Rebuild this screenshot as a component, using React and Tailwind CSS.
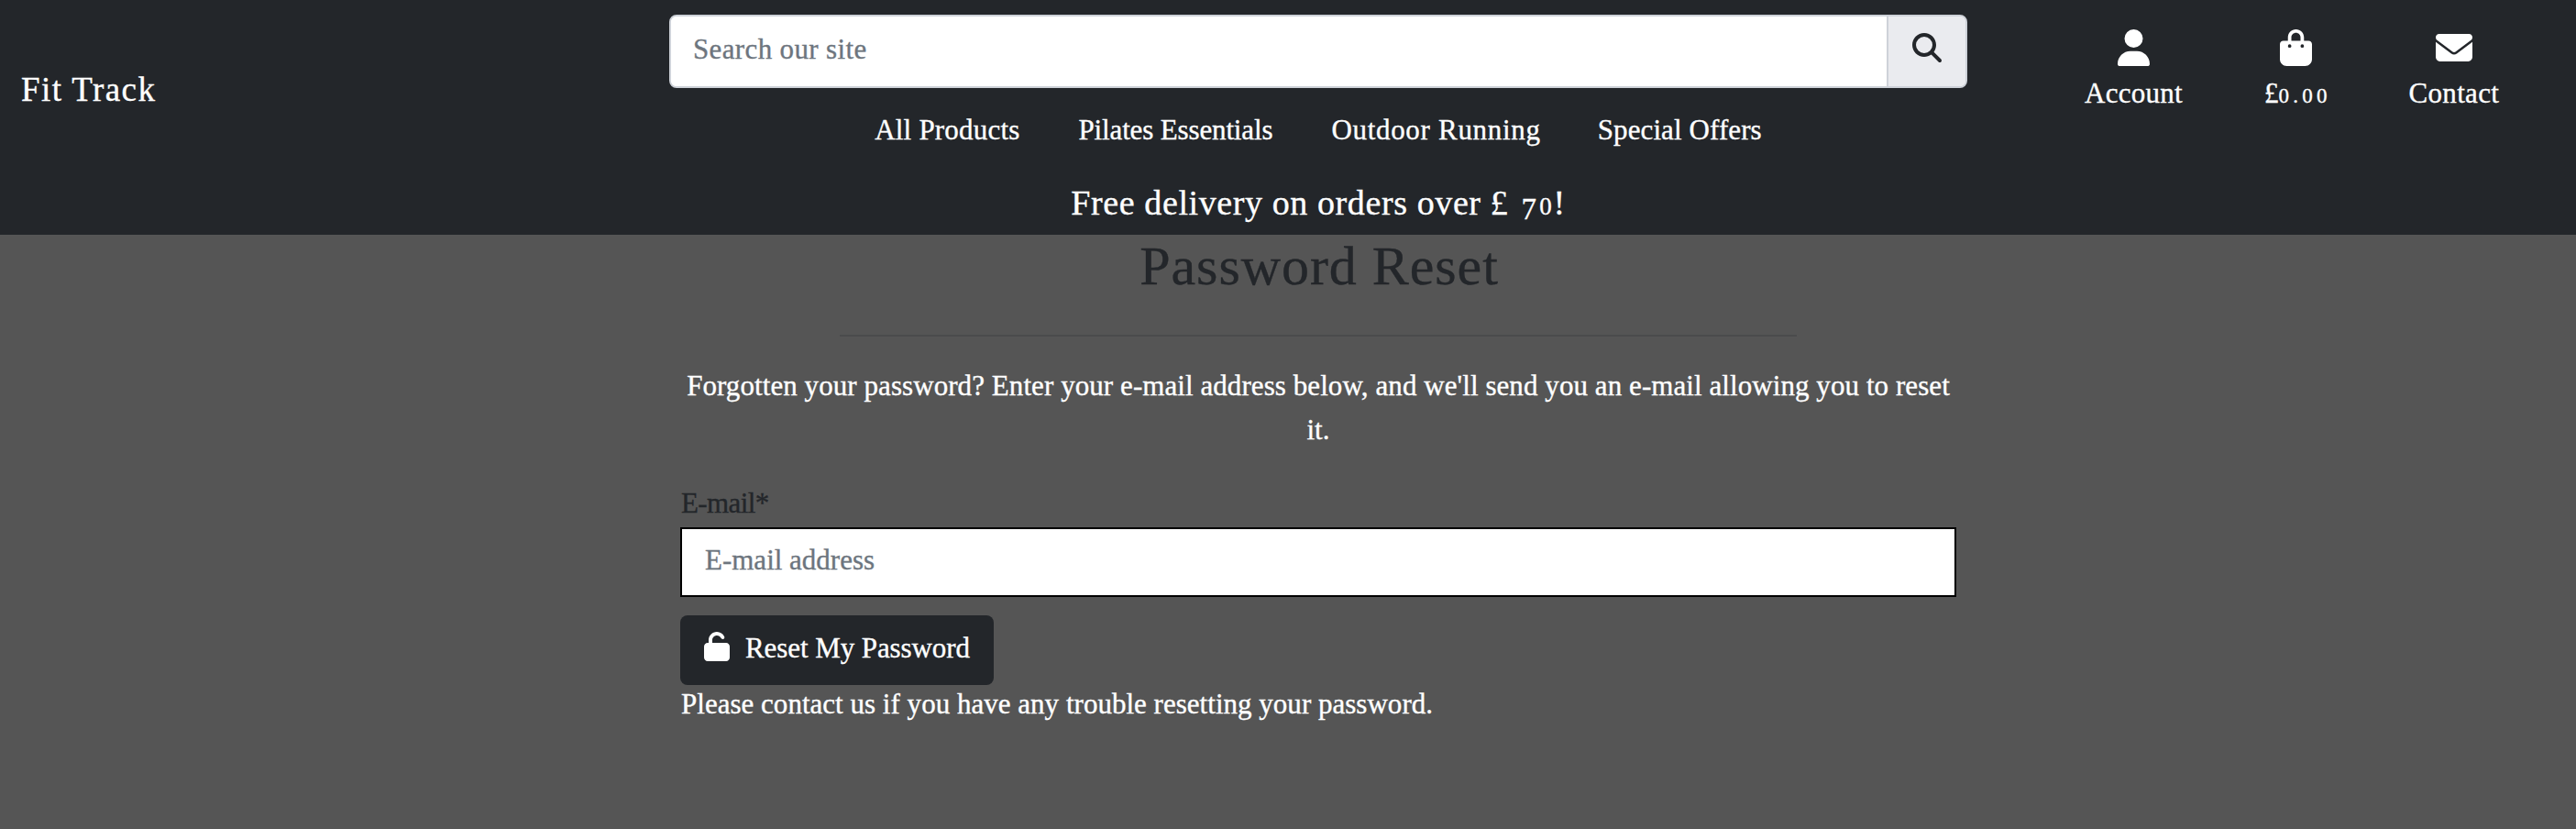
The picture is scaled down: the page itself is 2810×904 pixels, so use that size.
import React from "react";
import {
  FaUser,
  FaBagShopping,
  FaEnvelope,
  FaMagnifyingGlass,
  FaUnlock,
} from "react-icons/fa6";

function HeaderAction({ icon: Icon, iconClass, children }) {
  return (
    <a href="#" className="flex flex-col items-center gap-[6px]">
      <Icon className={iconClass} />
      <span className="text-[31px] leading-[48px] whitespace-nowrap">{children}</span>
    </a>
  );
}

function Header() {
  return (
    <header className="flex h-64 bg-[#23262a] text-white">
      <div className="w-[730px] pt-[74px] pl-[23px]">
        <a href="#" className="text-[37px] leading-[48px] tracking-[1.4px]">Fit Track</a>
      </div>

      <div className="w-[1416px] pt-4">
        <form className="flex h-20 overflow-hidden rounded-lg border-2 border-[#ced2d9] bg-white">
          <input
            type="text"
            placeholder="Search our site"
            className="min-w-0 flex-1 bg-white pb-[3px] pl-[24px] text-[31px] tracking-[0.36px] text-[#23262a] outline-none placeholder:text-[#6d757e]"
          />
          <button
            type="button"
            className="flex w-[86px] justify-center border-l-2 border-[#ced2d9] bg-[#eaebef] pt-[18px] text-[#23262a]"
          >
            <FaMagnifyingGlass className="size-8" />
          </button>
        </form>

        <nav className="mt-[22px] flex justify-center gap-16 text-[31px] leading-[48px] whitespace-nowrap">
          <a href="#" className="tracking-[0.2px]">All Products</a>
          <a href="#" className="tracking-[-0.14px]">Pilates Essentials</a>
          <a href="#" className="-mr-0.5 tracking-[0.7px]">Outdoor Running</a>
          <a href="#" className="tracking-[0.1px]">Special Offers</a>
        </nav>

        <h4 className="mt-[31px] text-center text-[38px] leading-[48px] tracking-[0.6px] whitespace-nowrap">
          Free delivery on orders over £{" "}
          <span className="relative top-[5px] ml-1 inline-block w-[19px] text-left text-[33px] leading-none">7</span>
          <span className="inline-block w-4 text-[27px] leading-none">0</span>!
        </h4>
      </div>

      <div className="flex items-start gap-[89px] pt-8 pl-32">
        <HeaderAction icon={FaUser} iconClass="h-10 w-[35px]">
          <span className="tracking-[0.27px]">Account</span>
        </HeaderAction>
        <HeaderAction icon={FaBagShopping} iconClass="h-10 w-[35px]">
          £<span className="text-[23px] tracking-[4.3px]">0.0</span>
          <span className="text-[23px]">0</span>
        </HeaderAction>
        <HeaderAction icon={FaEnvelope} iconClass="size-10">
          <span className="tracking-[0.3px]">Contact</span>
        </HeaderAction>
      </div>
    </header>
  );
}

function PasswordReset() {
  return (
    <main className="ml-[742px] flex w-[1392px] flex-col items-start text-[31px] text-white">
      <h2 className="mt-0.5 w-full pl-0.5 text-center text-[60px] leading-[64px] tracking-[0.95px] text-[#23262a]">
        Password Reset
      </h2>
      <hr className="mt-[43px] w-[1044px] self-center border-0 border-t-2 border-[#4a4b4c]" />
      <p className="mt-[30px] w-full text-center leading-[48px] tracking-[0.07px]">
        Forgotten your password? Enter your e-mail address below, and we'll send you an e-mail allowing you to reset
        it.
      </p>
      <label htmlFor="email" className="mt-8 pl-px leading-[48px] tracking-[-0.6px] text-[#23262a]">
        E-mail*
      </label>
      <input
        id="email"
        type="email"
        placeholder="E-mail address"
        className="mt-0.5 h-[76px] w-full border-2 border-black bg-white pb-1 pl-[25px] text-[31px] outline-none placeholder:text-[#6d757e]"
      />
      <button
        type="button"
        className="mt-5 flex h-[76px] w-[342px] rounded-lg bg-[#23262a] pl-[26px] leading-[48px] tracking-[-0.08px] whitespace-nowrap"
      >
        <FaUnlock className="mt-[18px] mr-[17px] h-8 w-7" />
        <span className="pt-3">Reset My Password</span>
      </button>
      <p className="mt-px pl-px leading-10 tracking-[0.02px]">
        Please contact us if you have any trouble resetting your password.
      </p>
    </main>
  );
}

export default function App() {
  return (
    <div className="h-[904px] w-[2810px] overflow-hidden bg-[#555555] font-['Liberation_Serif',serif] [-webkit-text-stroke:0.35px]">
      <Header />
      <PasswordReset />
    </div>
  );
}
